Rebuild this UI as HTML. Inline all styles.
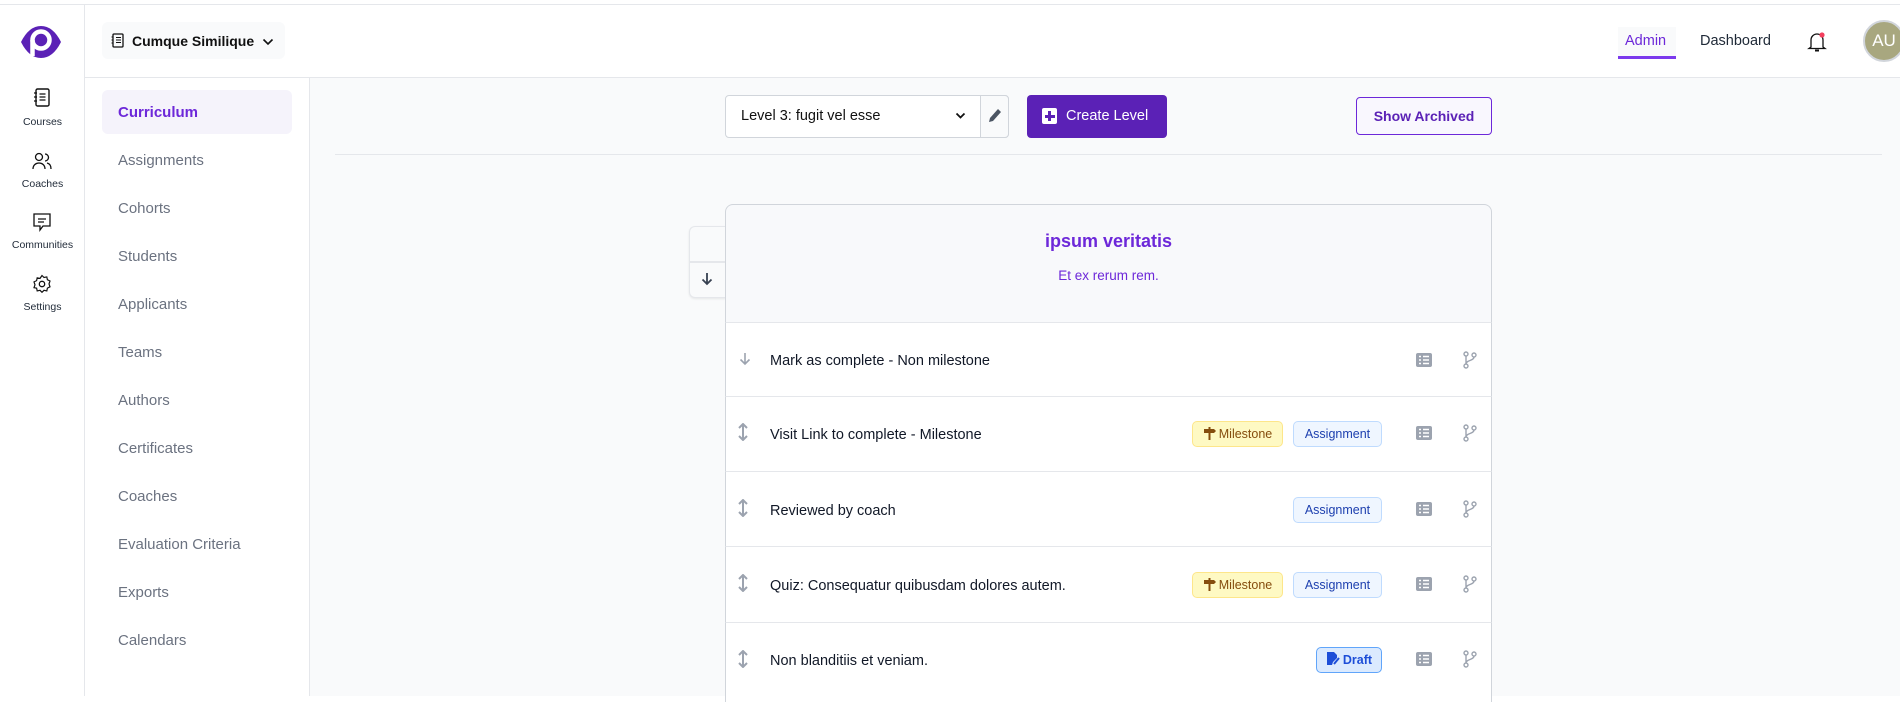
<!DOCTYPE html>
<html><head><meta charset="utf-8"><style>
*{box-sizing:border-box;margin:0;padding:0}
body{width:1900px;height:696px;overflow:hidden;background:#fff;font-family:"Liberation Sans",sans-serif;color:#111827;position:relative}
.abs{position:absolute}
.topline{left:0;top:0;width:1900px;height:5px;border-bottom:1px solid #e5e7eb;background:#fff}
.rail{left:0;top:5px;width:85px;height:691px;border-right:1px solid #e5e7eb;background:#fff}
.rl{position:absolute;width:85px;text-align:center;font-size:10.5px;color:#1f2937}
.side{left:85px;top:78px;width:225px;height:618px;border-right:1px solid #e5e7eb;background:#fff}
.header{left:85px;top:5px;width:1815px;height:73px;border-bottom:1px solid #e5e7eb;background:#fff}
.nav{position:absolute;left:33px;font-size:15px;color:#6b7280}
.main{left:310px;top:78px;width:1590px;height:618px;background:#f9fafb}
.row{position:absolute;left:725px;width:767px;background:#fff;border-top:1px solid #e5e7eb;border-left:1px solid #d1d5db;border-right:1px solid #d1d5db}
.row .t{position:absolute;left:44px;font-size:14.5px;color:#111827}
.badge{position:absolute;height:26px;border-radius:5px;font-size:12.5px;line-height:24px;text-align:center}
.badge svg{vertical-align:-2px;margin-right:3px}
.ms{background:#fef9c3;border:1px solid #fde68a;color:#854d0e}
.as{background:#eff6ff;border:1px solid #bfdbfe;color:#1e40af}
.dr{background:#dbeafe;border:1px solid #60a5fa;color:#1d4ed8}
</style></head><body>
<div class="abs topline"></div>
<div class="abs header">
  <div class="abs" style="left:17px;top:17px;width:183px;height:37px;background:#f9fafb;border-radius:6px"></div>
  <svg class="abs" style="left:26px;top:28px" width="14" height="15" viewBox="0 0 14 15"><rect x="2" y="1" width="10" height="13" rx="1" fill="none" stroke="#111" stroke-width="1.3"/><path d="M5 4.5h5M5 7h5M5 9.5h5M0.5 4h2M0.5 7h2M0.5 10h2" stroke="#111" stroke-width="1"/></svg>
  <div class="abs" style="left:47px;top:28px;font-size:14px;font-weight:bold;color:#111">Cumque Similique</div>
  <svg class="abs" style="left:177px;top:33px" width="12" height="8" viewBox="0 0 12 8"><path d="M1.5 1.5l4.5 4.5 4.5-4.5" fill="none" stroke="#111" stroke-width="1.6"/></svg>
  <div class="abs" style="left:1533px;top:22px;width:58px;height:32px;background:#f9fafb;border-bottom:3px solid #7c3aed"></div>
  <div class="abs" style="left:1540px;top:28px;font-size:14.5px;color:#6d28d9">Admin</div>
  <div class="abs" style="left:1615px;top:28px;font-size:14.5px;color:#1f2937">Dashboard</div>
  <svg class="abs" style="left:1722px;top:25px" width="20" height="24" viewBox="0 0 20 24"><path d="M4 17V10a6 6 0 0 1 12 0v7l2 1.5H2z" fill="none" stroke="#111" stroke-width="1.3"/><path d="M8 20.5h4" stroke="#111" stroke-width="2"/><circle cx="15" cy="5" r="2.6" fill="#f43f5e"/></svg>
  <div class="abs" style="left:1778px;top:15px;width:42px;height:42px;border-radius:50%;background:#a8a77f;border:2px solid #d1d5db;color:#fff;font-size:17px;line-height:38px;text-align:center">AU</div>
</div>
<div class="abs rail">
  <svg class="abs" style="left:20px;top:20px" width="42" height="34" viewBox="0 0 42 34"><path d="M1 17 Q9 1 21 1 Q33 1 41 17 Q33 33 21 33 Q9 33 1 17z" fill="#5b21b6"/><circle cx="21" cy="15" r="8.5" fill="none" stroke="#fff" stroke-width="4.5"/><path d="M12.5 15v16" stroke="#fff" stroke-width="4.5"/></svg>
  <svg class="abs" style="left:33px;top:83px" width="18" height="20" viewBox="0 0 18 20"><rect x="3" y="1" width="13" height="17" rx="1.5" fill="none" stroke="#111" stroke-width="1.4"/><path d="M6.5 6h6M6.5 9h6M6.5 12h6M1 5h3M1 9h3M1 13h3" stroke="#111" stroke-width="1.2"/></svg>
  <div class="rl" style="top:111px">Courses</div>
  <svg class="abs" style="left:32px;top:147px" width="20" height="18" viewBox="0 0 20 18"><circle cx="7" cy="5" r="3.5" fill="none" stroke="#111" stroke-width="1.3"/><path d="M1 17c0-4 3-6 6-6s6 2 6 6M13 2a3.5 3.5 0 0 1 0 7M15 11c2.5.5 4 2.5 4 6" fill="none" stroke="#111" stroke-width="1.3"/></svg>
  <div class="rl" style="top:173px">Coaches</div>
  <svg class="abs" style="left:32px;top:207px" width="20" height="20" viewBox="0 0 20 20"><path d="M2 2h16v12h-7l-3 4v-4H2z" fill="none" stroke="#111" stroke-width="1.3"/><path d="M6 7h8M6 10h6" stroke="#111" stroke-width="1.3"/></svg>
  <div class="rl" style="top:234px">Communities</div>
  <svg class="abs" style="left:32px;top:269px" width="20" height="20" viewBox="0 0 20 20"><path d="M10 1.5l2 2 2.8-.6.6 2.8 2.6 1.3-1 2.9 1 2.9-2.6 1.3-.6 2.8-2.8-.6-2 2-2-2-2.8.6-.6-2.8L2 13.7l1-2.9-1-2.9 2.6-1.3.6-2.8 2.8.6z" fill="none" stroke="#111" stroke-width="1.2"/><circle cx="10" cy="10" r="2.7" fill="none" stroke="#111" stroke-width="1.3"/></svg>
  <div class="rl" style="top:296px">Settings</div>
</div>
<div class="abs side">
  <div class="abs" style="left:17px;top:12px;width:190px;height:44px;background:#f5f3fb;border-radius:6px"></div>
  <div class="nav" style="top:26px;color:#6d28d9;font-weight:bold">Curriculum</div>
  <div class="nav" style="top:74px">Assignments</div>
  <div class="nav" style="top:122px">Cohorts</div>
  <div class="nav" style="top:170px">Students</div>
  <div class="nav" style="top:218px">Applicants</div>
  <div class="nav" style="top:266px">Teams</div>
  <div class="nav" style="top:314px">Authors</div>
  <div class="nav" style="top:362px">Certificates</div>
  <div class="nav" style="top:410px">Coaches</div>
  <div class="nav" style="top:458px">Evaluation Criteria</div>
  <div class="nav" style="top:506px">Exports</div>
  <div class="nav" style="top:554px">Calendars</div>
</div>
<div class="abs main"></div>
<div class="abs" style="left:725px;top:95px;width:284px;height:43px;background:#fff;border:1px solid #d1d5db;border-radius:4px"></div>
<div class="abs" style="left:980px;top:95px;width:29px;height:43px;background:#f9fafb;border:1px solid #d1d5db;border-radius:0 4px 4px 0"></div>
<div class="abs" style="left:741px;top:108px;font-size:14.5px;color:#111">Level 3: fugit vel esse</div>
<svg class="abs" style="left:955px;top:112px" width="11" height="8" viewBox="0 0 11 8"><path d="M1.5 1.5l4 4 4-4" fill="none" stroke="#111" stroke-width="1.8"/></svg>
<svg class="abs" style="left:988px;top:108px" width="14" height="16" viewBox="0 0 14 16"><path d="M10 1l3 3-8 9-4 1 1-4z" fill="#4b5563"/></svg>
<div class="abs" style="left:1027px;top:95px;width:140px;height:43px;background:#5b21b6;border-radius:4px"></div>
<div class="abs" style="left:1042px;top:108px;width:15px;height:16px;background:#fff;border-radius:2px"></div>
<div class="abs" style="left:1048px;top:111px;width:3px;height:10px;background:#5b21b6"></div>
<div class="abs" style="left:1044.5px;top:114.5px;width:10px;height:3px;background:#5b21b6"></div>
<div class="abs" style="left:1066px;top:108px;font-size:14.5px;color:#fff">Create Level</div>
<div class="abs" style="left:1356px;top:97px;width:136px;height:38px;background:#f9f7fe;border:1px solid #6d28d9;border-radius:4px;color:#5b21b6;font-size:14px;font-weight:bold;text-align:center;line-height:36px">Show Archived</div>
<div class="abs" style="left:335px;top:154px;width:1547px;height:1px;background:#e5e7eb"></div>
<div class="abs" style="left:689px;top:226px;width:37px;height:72px;background:#f9fafb;border:1px solid #e5e7eb;border-right:none;border-radius:6px 0 0 6px;box-shadow:0 1px 2px rgba(0,0,0,.08)"></div>
<div class="abs" style="left:689px;top:261px;width:36px;height:2px;background:#e5e7eb"></div>
<svg class="abs" style="left:701px;top:272px" width="12" height="14" viewBox="0 0 12 14"><path d="M6 1v11M1.5 7.5L6 12l4.5-4.5" fill="none" stroke="#374151" stroke-width="1.8"/></svg>
<div class="abs" style="left:725px;top:204px;width:767px;height:119px;background:#f8f9fb;border:1px solid #d1d5db;border-bottom:none;border-radius:8px 8px 0 0"></div>
<div class="abs" style="left:725px;top:231px;width:767px;text-align:center;font-size:18px;font-weight:bold;color:#6d28d9">ipsum veritatis</div>
<div class="abs" style="left:725px;top:268px;width:767px;text-align:center;font-size:13.5px;color:#6d28d9">Et ex rerum rem.</div>

<svg width="0" height="0" style="position:absolute"><defs>
<g id="h"><path d="M6 1v16M2 5l4-4 4 4M2 13l4 4 4-4" fill="none" stroke="#9ca3af" stroke-width="2"/></g>
<g id="l"><rect x="0" y="0" width="16" height="14" rx="2" fill="#9ca3af"/><path d="M3 3.5h2M7 3.5h6M3 7h2M7 7h6M3 10.5h2M7 10.5h6" stroke="#fff" stroke-width="1.4"/></g>
<g id="b"><circle cx="3" cy="3" r="2" fill="none" stroke="#9ca3af" stroke-width="1.4"/><circle cx="3" cy="15" r="2" fill="none" stroke="#9ca3af" stroke-width="1.4"/><circle cx="11" cy="4" r="2" fill="none" stroke="#9ca3af" stroke-width="1.4"/><path d="M3 5v8M11 6c0 4-8 3-8 7" fill="none" stroke="#9ca3af" stroke-width="1.4"/></g>
<g id="m"><path d="M1 2h10l2 2-2 2H1z" fill="#854d0e"/><rect x="5.5" y="0" width="2" height="13" fill="#854d0e"/></g>
</defs></svg>

<div class="row" style="top:322px;height:74px">
  <svg class="abs" style="left:13px;top:29px" width="12" height="14" viewBox="0 0 12 14"><path d="M6 1v11M1.5 7.5L6 12l4.5-4.5" fill="none" stroke="#9ca3af" stroke-width="1.6"/></svg>
  <div class="t" style="top:30px">Mark as complete - Non milestone</div>
</div>
<div class="row" style="top:396px;height:75px"><div class="t" style="top:30px">Visit Link to complete - Milestone</div>
  <div class="badge ms" style="left:466px;top:24px;width:91px"><svg width="13" height="13"><use href="#m"/></svg>Milestone</div><div class="badge as" style="left:567px;top:24px;width:89px">Assignment</div></div>
<div class="row" style="top:471px;height:75px"><div class="t" style="top:31px">Reviewed by coach</div>
  <div class="badge as" style="left:567px;top:25px;width:89px">Assignment</div></div>
<div class="row" style="top:546px;height:76px"><div class="t" style="top:31px">Quiz: Consequatur quibusdam dolores autem.</div>
  <div class="badge ms" style="left:466px;top:25px;width:91px"><svg width="13" height="13"><use href="#m"/></svg>Milestone</div><div class="badge as" style="left:567px;top:25px;width:89px">Assignment</div></div>
<div class="row" style="top:622px;height:80px"><div class="t" style="top:30px">Non blanditiis et veniam.</div>
  <div class="badge dr" style="left:590px;top:24px;width:66px;font-weight:bold"><svg width="14" height="14" viewBox="0 0 14 14"><path d="M1 0h7l3 3v3l-4 4-1 3H1z" fill="#1d4ed8"/><path d="M8 12l5-6" stroke="#1d4ed8" stroke-width="2"/></svg>Draft</div></div>

<svg class="abs" style="left:737px;top:423px" width="12" height="18"><use href="#h"/></svg>
<svg class="abs" style="left:737px;top:499px" width="12" height="18"><use href="#h"/></svg>
<svg class="abs" style="left:737px;top:574px" width="12" height="18"><use href="#h"/></svg>
<svg class="abs" style="left:737px;top:650px" width="12" height="18"><use href="#h"/></svg>
<svg class="abs" style="left:1416px;top:353px" width="16" height="14"><use href="#l"/></svg>
<svg class="abs" style="left:1416px;top:426px" width="16" height="14"><use href="#l"/></svg>
<svg class="abs" style="left:1416px;top:502px" width="16" height="14"><use href="#l"/></svg>
<svg class="abs" style="left:1416px;top:577px" width="16" height="14"><use href="#l"/></svg>
<svg class="abs" style="left:1416px;top:652px" width="16" height="14"><use href="#l"/></svg>
<svg class="abs" style="left:1463px;top:351px" width="14" height="18"><use href="#b"/></svg>
<svg class="abs" style="left:1463px;top:424px" width="14" height="18"><use href="#b"/></svg>
<svg class="abs" style="left:1463px;top:500px" width="14" height="18"><use href="#b"/></svg>
<svg class="abs" style="left:1463px;top:575px" width="14" height="18"><use href="#b"/></svg>
<svg class="abs" style="left:1463px;top:650px" width="14" height="18"><use href="#b"/></svg>
</body></html>
